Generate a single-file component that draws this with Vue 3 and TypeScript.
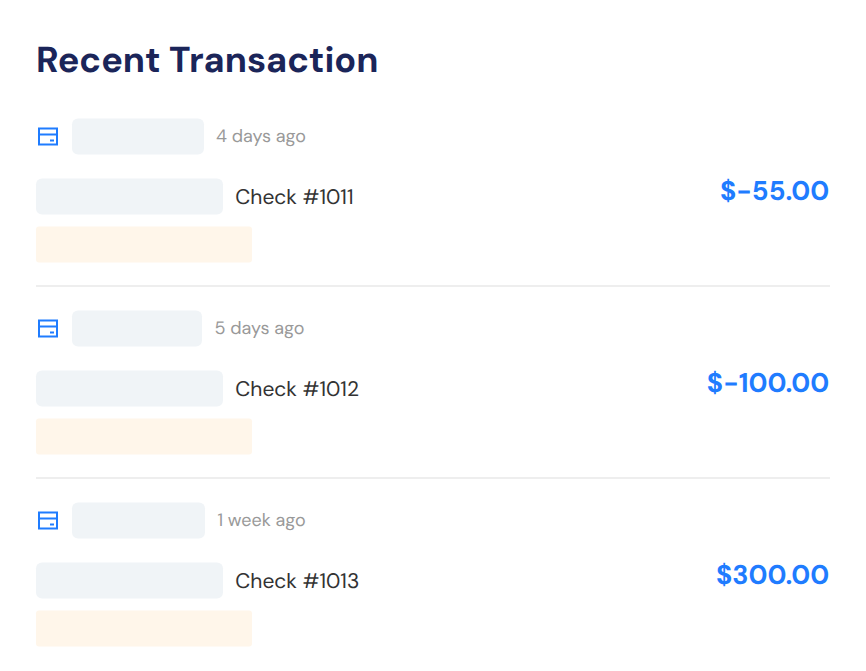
<script setup lang="ts">
interface Transaction {
  age: string
  tagWidth: number
  check: string
  amount: string
}

const transactions: Transaction[] = [
  { age: '4 days ago', tagWidth: 132, check: 'Check #1011', amount: '$-55.00' },
  { age: '5 days ago', tagWidth: 130.4, check: 'Check #1012', amount: '$-100.00' },
  { age: '1 week ago', tagWidth: 133.4, check: 'Check #1013', amount: '$300.00' },
]
</script>

<template>
  <main class="panel">
    <h1>Recent Transaction</h1>
    <section v-for="item in transactions" :key="item.check" class="transaction">
      <div class="meta">
        <svg class="card-icon" viewBox="0 0 24 24" fill="none" stroke="currentColor" stroke-width="2">
          <path d="M3 4H21V20H3ZM3 10H21M14 16H18" />
        </svg>
        <span class="tag" :style="{ width: item.tagWidth + 'px' }"></span>
        <span class="age">{{ item.age }}</span>
      </div>
      <div class="detail">
        <div class="description">
          <div class="reference">
            <span class="name"></span>
            <span class="check">{{ item.check }}</span>
          </div>
          <span class="status"></span>
        </div>
        <strong class="amount">{{ item.amount }}</strong>
      </div>
    </section>
  </main>
</template>

<style>
body { margin: 0; background: #fff; }
</style>

<style scoped>
.panel { box-sizing: border-box; width: 866px; height: 671px; padding: 37px 36px 0; overflow: hidden; font-family: "DM Sans", Lato, sans-serif; font-optical-sizing: none; font-variation-settings: "opsz" 14; text-rendering: geometricPrecision; white-space: nowrap; }
h1 { height: 82px; margin: 0; color: #1b2559; font-size: 36px; line-height: 48px; font-weight: 700; }
.transaction { box-sizing: border-box; height: 192px; }
.meta { display: flex; align-items: center; height: 36px; transform: translateY(-.5px); }
.card-icon { width: 24px; height: 24px; margin-right: 12px; color: #1f7cff; }
.tag, .name { flex: none; height: 36px; border-radius: 6px; background: #f0f4f7; }
.age { margin-left: 12px; padding-bottom: 2px; color: #999; font-size: 18px; line-height: 24px; }
.detail { display: flex; justify-content: space-between; box-sizing: border-box; width: 794px; height: 132px; padding-top: 24px; border-bottom: 2px solid #eee; }
.transaction:last-child .detail { border-bottom-color: transparent; }
.description { transform: translateY(-.5px); }
.reference { display: flex; align-items: center; height: 36px; }
.name { width: 187px; }
.check { margin-left: 12.3px; color: #333; font-size: 21px; }
.status { display: block; width: 216px; height: 36px; margin-top: 12px; border-radius: 3px; background: #fff6ea; }
.amount { margin: -5px .8px 0 0; color: #1f7cff; font-size: 27px; line-height: 36px; font-weight: 700; }
</style>
